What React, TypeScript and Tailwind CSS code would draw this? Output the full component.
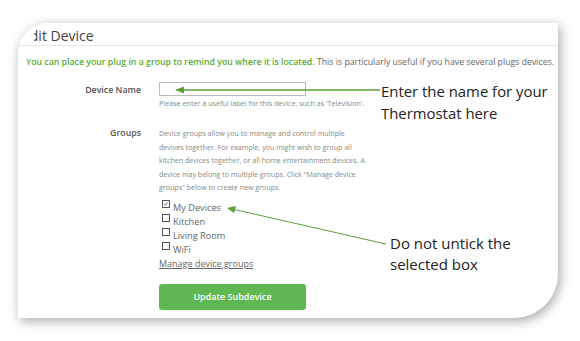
import React from 'react';

const groups = [
    { name: 'My Devices', checked: true },
    { name: 'Kitchen', checked: false },
    { name: 'Living Room', checked: false },
    { name: 'WiFi', checked: false },
];

const Checkbox: React.FC<{ checked: boolean }> = ({ checked }) => (
    <span className="inline-flex w-[8px] h-[8px] border border-[#555] bg-white items-center justify-center">
        {checked && (
            <svg viewBox="0 0 8 8" className="w-[8px] h-[8px]">
                <path d="M1.5 4 L3.2 5.8 L6.5 1.8" fill="none" stroke="#444" strokeWidth="1" />
            </svg>
        )}
    </span>
);

export default function App() {
    return (
        <div className="w-[580px] h-[341px] bg-white pt-[23px] pl-[18px]" style={{ fontFamily: '"Open Sans", sans-serif' }}>
            <div className="relative w-[540px] h-[295px] bg-white rounded-tl-[30px] rounded-br-[44px] shadow-[2px_3px_12px_rgba(0,0,0,0.35)] overflow-hidden">
                {/* header */}
                <div className="h-[23px] border-b border-[#e6e6e6] flex items-center pl-[16px] pt-[3px]">
                    <div className="overflow-hidden">
                        <h2 className="-ml-[12px] text-[14px] leading-none text-[#444]">Edit Device</h2>
                    </div>
                </div>

                <p className="mt-[10px] pl-[8px] text-[8.75px] leading-[12px] text-[#666] whitespace-nowrap">
                    <span className="text-[#5aac2e] font-semibold">You can place your plug in a group to remind you where it is located.</span>{' '}
                    This is particularly useful if you have several plugs devices.
                </p>

                <div className="mt-[14px] grid grid-cols-[123px_1fr] gap-x-[18px]">
                    <div className="text-right text-[8.8px] font-semibold text-[#555] pt-[2px] leading-[12px]">Device Name</div>
                    <div>
                        <div className="w-[147px] h-[14px] border border-[#bbb]" />
                        <p className="mt-[3px] text-[7.2px] leading-[9px] text-[#888] whitespace-nowrap">Please enter a useful label for this device, such as 'Television'.</p>
                    </div>

                    <div className="mt-[19px] text-right text-[8.8px] font-semibold text-[#555] leading-[12px]">Groups</div>
                    <div className="mt-[19px]">
                        <p className="text-[7.1px] leading-[13.6px] text-[#888] whitespace-nowrap">
                            Device groups allow you to manage and control multiple<br />
                            devives together. For example, you might wish to group all<br />
                            kitchen devices together, or all home entertainment devices. A<br />
                            device may belong to multiple groups. Click "Manage device<br />
                            groups" below to create new groups.
                        </p>
                        <ul className="mt-[5px] pl-[3px] flex flex-col">
                            {groups.map((g) => (
                                <li key={g.name} className="flex items-start gap-[3px] h-[14px]">
                                    <Checkbox checked={g.checked} />
                                    <span className="pt-[2px] text-[9.2px] leading-[12px] text-[#666]">{g.name}</span>
                                </li>
                            ))}
                        </ul>
                        <a className="block mt-[2px] text-[9px] leading-[12px] text-[#666] underline">Manage device groups</a>
                        <button className="mt-[14px] w-[147px] h-[26px] rounded-[3px] bg-[#5fb751] text-white text-[9px] font-semibold">
                            Update Subdevice
                        </button>
                    </div>
                </div>

                {/* annotations */}
                <div className="absolute left-[363px] top-[57px] text-[14.9px] leading-[22px] text-[#222]">
                    Enter the name for your<br />Thermostat here
                </div>
                <div className="absolute left-[372px] top-[210px] text-[15px] leading-[21px] text-[#222]">
                    Do not untick the<br />selected box
                </div>
                <svg className="absolute left-0 top-0 pointer-events-none" width="540" height="295">
                    <line x1="362" y1="67" x2="162" y2="67" stroke="#5aa13a" strokeWidth="1.4" />
                    <polygon points="157,67 166,63.5 166,70.5" fill="#5aa13a" />
                    <line x1="368" y1="221" x2="214" y2="186" stroke="#5aa13a" strokeWidth="1" />
                    <polygon points="209,185 218,183 216,190" fill="#5aa13a" />
                </svg>
            </div>
        </div>
    );
}
